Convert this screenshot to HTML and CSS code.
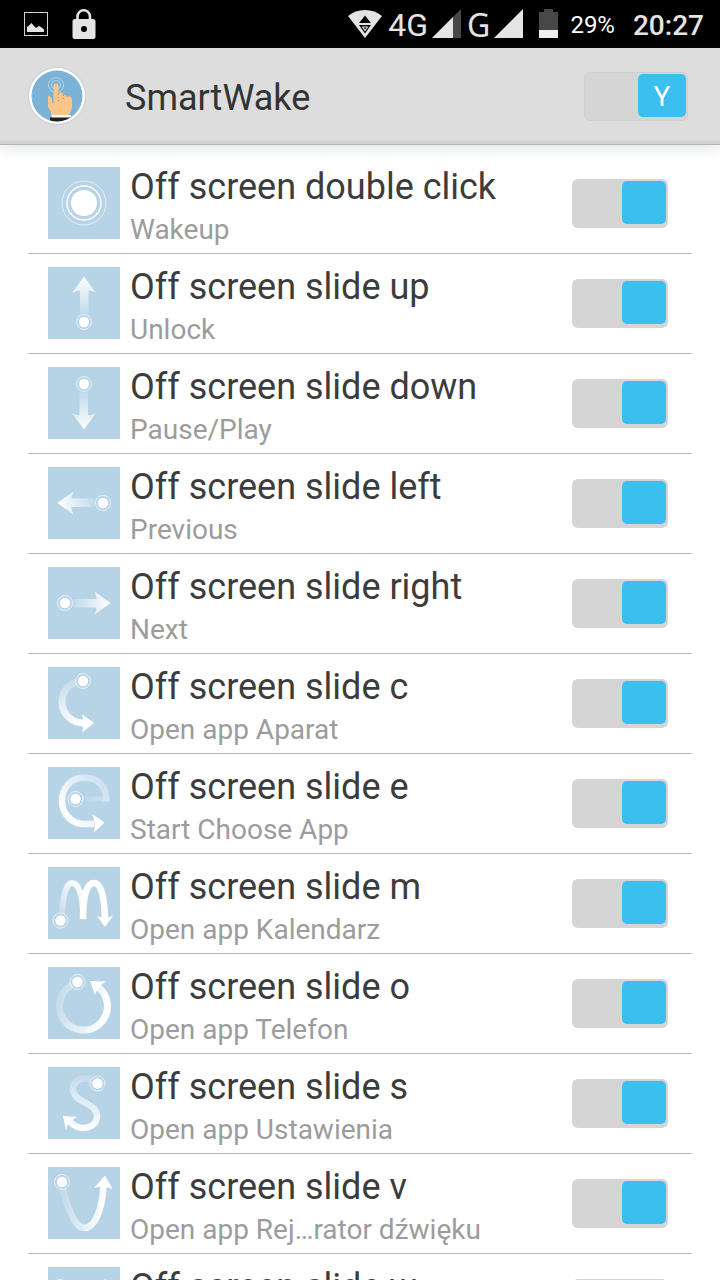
FILE: index.html
```html
<!DOCTYPE html>
<html lang="en">
<head>
    <meta charset="UTF-8">
    <meta name="viewport" content="width=device-width, initial-scale=1">
    <title>SmartWake</title>
    <link rel="stylesheet" href="styles.css">
</head>
<body>
    <!-- shared gradients and gesture parts -->
    <svg class="defs" width="0" height="0" aria-hidden="true">
        <defs>
            <linearGradient id="fade-up" gradientUnits="userSpaceOnUse" x1="0" y1="48" x2="0" y2="12">
                <stop offset="0" stop-color="#fff" stop-opacity="0.1"/>
                <stop offset="1" stop-color="#fff" stop-opacity="0.95"/>
            </linearGradient>
            <linearGradient id="fade-c" gradientUnits="userSpaceOnUse" x1="26" y1="10" x2="34" y2="58">
                <stop offset="0" stop-color="#fff" stop-opacity="0.15"/>
                <stop offset="1" stop-color="#fff"/>
            </linearGradient>
            <linearGradient id="fade-e" gradientUnits="userSpaceOnUse" x1="60" y1="20" x2="22" y2="50">
                <stop offset="0" stop-color="#fff" stop-opacity="0.3"/>
                <stop offset="1" stop-color="#fff" stop-opacity="0.95"/>
            </linearGradient>
            <linearGradient id="fade-bar" gradientUnits="userSpaceOnUse" x1="32" y1="0" x2="62" y2="0">
                <stop offset="0" stop-color="#fff" stop-opacity="0.05"/>
                <stop offset="1" stop-color="#fff" stop-opacity="0.3"/>
            </linearGradient>
            <linearGradient id="fade-right" gradientUnits="userSpaceOnUse" x1="10" y1="50" x2="38" y2="30">
                <stop offset="0" stop-color="#fff" stop-opacity="0.1"/>
                <stop offset="1" stop-color="#fff" stop-opacity="0.95"/>
            </linearGradient>
            <linearGradient id="fade-o" gradientUnits="userSpaceOnUse" x1="12" y1="24" x2="60" y2="38">
                <stop offset="0" stop-color="#fff" stop-opacity="0.2"/>
                <stop offset="1" stop-color="#fff"/>
            </linearGradient>
            <linearGradient id="fade-s" gradientUnits="userSpaceOnUse" x1="40" y1="8" x2="34" y2="60">
                <stop offset="0" stop-color="#fff" stop-opacity="0.15"/>
                <stop offset="1" stop-color="#fff" stop-opacity="0.95"/>
            </linearGradient>
            <linearGradient id="fade-v" gradientUnits="userSpaceOnUse" x1="14" y1="30" x2="56" y2="34">
                <stop offset="0" stop-color="#fff" stop-opacity="0.15"/>
                <stop offset="1" stop-color="#fff"/>
            </linearGradient>
            <g id="dot">
                <circle r="5.2" fill="#fff"/>
                <circle r="7.5" fill="none" stroke="#fff" stroke-opacity="0.65"/>
            </g>
            <g id="arrow-up">
                <path d="M36 9.500 47.500 25.500Q43 23.500 40.500 23.500V47H32V23.500Q29 23.500 24.500 25.500Z" fill="url(#fade-up)"/>
                <use href="#dot" x="36" y="55"/>
            </g>
        </defs>
    </svg>

    <div class="status-bar">
        <div class="status-left">
            <svg width="24" height="24" viewBox="0 0 24 24">
                <rect x="0.500" y="0.500" width="23" height="23" fill="none" stroke="#cfcfcf"/>
                <path d="M3 20V15L5 13.500 7.500 11 10 14 12 16 15 14 17 15 20 17.500V20Z" fill="#e4e4e4"/>
            </svg>
            <svg width="24" height="30" viewBox="0 0 24 30">
                <path d="M5.500 11V7.500A6.200 6.200 0 0 1 18 7.500V11" fill="none" stroke="#e4e4e4" stroke-width="2.600"/>
                <path fill-rule="evenodd" d="M3 10H21A2.500 2.500 0 0 1 23.500 12.500V27.500A2.500 2.500 0 0 1 21 30H3A2.500 2.500 0 0 1 0.500 27.500V12.500A2.500 2.500 0 0 1 3 10ZM12 17A3 3 0 1 0 12 23 3 3 0 0 0 12 17Z" fill="#e4e4e4"/>
            </svg>
        </div>
        <div class="status-right">
            <svg width="34" height="28" viewBox="0 0 34 28">
                <path d="M0 6Q7 0 17 0T34 6L17 28Z" fill="#e4e4e4"/>
                <path d="M17 5.500 23 13H11ZM11 15H23L17 23.500Z" fill="#000"/>
                <path d="M13.500 16.500H20.500L17 21.500Z" fill="#e4e4e4"/>
                <path d="M15.500 17.500H18.500L17 19.500Z" fill="#000"/>
            </svg>
            <span class="net-4g">4G</span>
            <svg width="29" height="29" viewBox="0 0 29 29">
                <path d="M29 0V29H0Z" fill="#484848"/>
                <path d="M21 8V29H0Z" fill="#e4e4e4"/>
            </svg>
            <span class="net-g">G</span>
            <svg width="29" height="29" viewBox="0 0 29 29">
                <path d="M29 0V29H0Z" fill="#e4e4e4"/>
            </svg>
            <svg class="battery" width="19" height="29" viewBox="0 0 19 29">
                <path d="M5 0H14V3H19V29H0V3H5Z" fill="#484848"/>
                <path d="M0 21H19V29H0Z" fill="#f0f0f0"/>
            </svg>
            <span class="percent">29%</span>
            <span class="clock">20:27</span>
        </div>
    </div>

    <header class="header">
        <svg class="logo" width="60" height="60" viewBox="0 0 60 60">
            <defs><clipPath id="logo-clip"><circle cx="30" cy="30" r="25.500"/></clipPath></defs>
            <circle cx="30" cy="30" r="29" fill="#cecece"/>
            <circle cx="30" cy="30" r="28" fill="#fff"/>
            <circle cx="30" cy="30" r="25.500" fill="#7bb2d6"/>
            <g fill="none" stroke="#b5d5e9">
                <circle cx="29" cy="19" r="7.500"/>
                <circle cx="29" cy="19" r="4.500"/>
            </g>
            <g clip-path="url(#logo-clip)">
                <path d="M24 50V46L21 41V31Q21 29 23 30L25 33V37H26.500V20Q26.500 17.500 29 17.500T31.500 20V28Q34 25.500 36 27.500V29Q39 28 40 31 44 29 45 33V42L42 49V50Z" fill="#f9c588"/>
                <path d="M31.500 28V35M36.500 29V34" stroke="#b98b5d" stroke-dasharray="1 2" fill="none"/>
                <path d="M25 49H44V52H25Z" fill="#fff"/>
                <path d="M23 51.500H44V57H23Z" fill="#222"/>
            </g>
        </svg>
        <h1><label for="main">SmartWake</label></h1>
        <span class="main-switch">
            <input class="switch" type="checkbox" id="main" checked>
            <span class="switch-text">Y</span>
        </span>
    </header>

    <main class="list">
        <div class="row">
            <svg class="icon" viewBox="0 0 72 72">
                <circle cx="36" cy="36" r="13" fill="#fff"/>
                <circle cx="36" cy="36" r="17" fill="none" stroke="#fff" stroke-width="1.400"/>
                <circle cx="36" cy="36" r="22" fill="none" stroke="#fff" stroke-opacity="0.6"/>
            </svg>
            <div class="text"><label for="g1">Off screen double click</label><p>Wakeup</p></div>
            <input class="switch" type="checkbox" id="g1" checked>
        </div>
        <div class="row">
            <svg class="icon" viewBox="0 0 72 72"><use href="#arrow-up"/></svg>
            <div class="text"><label for="g2">Off screen slide up</label><p>Unlock</p></div>
            <input class="switch" type="checkbox" id="g2" checked>
        </div>
        <div class="row">
            <svg class="icon" viewBox="0 0 72 72"><use href="#arrow-up" transform="rotate(180 36 36)"/></svg>
            <div class="text"><label for="g3">Off screen slide down</label><p>Pause/Play</p></div>
            <input class="switch" type="checkbox" id="g3" checked>
        </div>
        <div class="row">
            <svg class="icon" viewBox="0 0 72 72"><use href="#arrow-up" transform="rotate(-90 36 36)"/></svg>
            <div class="text"><label for="g4">Off screen slide left</label><p>Previous</p></div>
            <input class="switch" type="checkbox" id="g4" checked>
        </div>
        <div class="row">
            <svg class="icon" viewBox="0 0 72 72"><use href="#arrow-up" transform="rotate(90 36 36)"/></svg>
            <div class="text"><label for="g5">Off screen slide right</label><p>Next</p></div>
            <input class="switch" type="checkbox" id="g5" checked>
        </div>
        <div class="row">
            <svg class="icon" viewBox="0 0 72 72">
                <path d="M29 15C19 18 14 26 14 35 14 47 24 56 36 56" fill="none" stroke="url(#fade-c)" stroke-width="7"/>
                <path d="M34 47 46 56 34 65.500Q36.500 56 34 47Z" fill="#fff"/>
                <use href="#dot" x="35" y="14"/>
            </svg>
            <div class="text"><label for="g6">Off screen slide c</label><p>Open app Aparat</p></div>
            <input class="switch" type="checkbox" id="g6" checked>
        </div>
        <div class="row">
            <svg class="icon" viewBox="0 0 72 72">
                <path d="M34 32H55" fill="none" stroke="url(#fade-bar)" stroke-width="5"/>
                <path d="M55 31.500H58.500C58 19 49 10.500 36 10.500 23 10.500 14 21 14 34 14 47 24 57 36 57H46" fill="none" stroke="url(#fade-e)" stroke-width="6.500" stroke-linejoin="round"/>
                <path d="M44 47 56.500 55.500 46 65.500Q48 56 44 47Z" fill="#fff"/>
                <use href="#dot" x="27.500" y="32"/>
            </svg>
            <div class="text"><label for="g7">Off screen slide e</label><p>Start Choose App</p></div>
            <input class="switch" type="checkbox" id="g7" checked>
        </div>
        <div class="row">
            <svg class="icon" viewBox="0 0 72 72">
                <path d="M14 47C15 28 18 16 24 16 31 16 35 30 35 48" fill="none" stroke="url(#fade-right)" stroke-width="6"/>
                <path d="M35 52C35 28 39 16 46 16 53 16 56.500 30 57 51" fill="none" stroke="#fff" stroke-width="6.500"/>
                <path d="M49 49Q57 52 65 49L57 60Z" fill="#fff"/>
                <use href="#dot" x="12.500" y="53.500"/>
            </svg>
            <div class="text"><label for="g8">Off screen slide m</label><p>Open app Kalendarz</p></div>
            <input class="switch" type="checkbox" id="g8" checked>
        </div>
        <div class="row">
            <svg class="icon" viewBox="0 0 72 72">
                <path d="M24 18A24 24 0 1 0 50 20" fill="none" stroke="url(#fade-o)" stroke-width="7"/>
                <path d="M42 14 57.500 14.500Q50 19 47 28Z" fill="#fff"/>
                <use href="#dot" x="29.500" y="15"/>
            </svg>
            <div class="text"><label for="g9">Off screen slide o</label><p>Open app Telefon</p></div>
            <input class="switch" type="checkbox" id="g9" checked>
        </div>
        <div class="row">
            <svg class="icon" viewBox="0 0 72 72">
                <path d="M43 12C33 10 25 14 25 22 25 36 49 35 49 49 49 57 42 61 35 61 29 61 25 58 21 54" fill="none" stroke="url(#fade-s)" stroke-width="6.500"/>
                <path d="M15 49 29 50Q20 54 18 63Z" fill="#fff"/>
                <use href="#dot" x="49.500" y="16.500"/>
            </svg>
            <div class="text"><label for="g10">Off screen slide s</label><p>Open app Ustawienia</p></div>
            <input class="switch" type="checkbox" id="g10" checked>
        </div>
        <div class="row">
            <svg class="icon" viewBox="0 0 72 72">
                <path d="M15 22C19 40 27 61 36 61 46 61 54 45 55.500 19" fill="none" stroke="url(#fade-v)" stroke-width="6.500"/>
                <path d="M57 8.500 64.500 22Q55 18 46 21Z" fill="#fff"/>
                <use href="#dot" x="14" y="15"/>
            </svg>
            <div class="text"><label for="g11">Off screen slide v</label><p>Open app Rej…rator dźwięku</p></div>
            <input class="switch" type="checkbox" id="g11" checked>
        </div>
        <div class="row">
            <svg class="icon" viewBox="0 0 72 72">
                <path d="M12 24C14 44 18 56 24 56 30 56 35 44 35 28 35 44 40 56 46 56 52 56 56 44 57 22" fill="none" stroke="url(#fade-v)" stroke-width="6"/>
                <path d="M57 12 65 24Q57 21 49 24Z" fill="#fff"/>
                <use href="#dot" x="12" y="20"/>
            </svg>
            <div class="text"><label for="g12">Off screen slide w</label></div>
            <input class="switch" type="checkbox" id="g12" checked>
        </div>
    </main>
</body>
</html>
```

FILE: styles.css
```css
* {
    box-sizing: border-box;
}

body {
    margin: 0;
    height: 100vh;
    overflow: hidden;
    background-color: #fff;
    color: #3c3c3c;
    font-family: Roboto, sans-serif;
}

svg {
    display: block;
    flex-shrink: 0;
}

.defs {
    position: absolute;
}

/* status bar */

.status-bar {
    display: flex;
    justify-content: space-between;
    align-items: center;
    height: 48px;
    padding: 0 16px 0 24px;
    background-color: #000;
    color: #e4e4e4;
}

.status-left,
.status-right {
    display: flex;
    align-items: center;
}

.status-left {
    gap: 24px;
}

.status-right svg {
    margin-bottom: 1px;
}

.status-right span {
    padding-top: 2px;
}

.net-4g,
.net-g {
    margin: 0 4px 0 6px;
    font-size: 32px;
    line-height: 46px;
}

.net-g {
    font-family: "Noto Sans", sans-serif;
}

.battery {
    margin: 0 12px 0 16px;
}

.percent {
    margin-right: 18px;
    font-size: 24px;
    color: #fff;
}

.clock {
    font-size: 28px;
    font-weight: 500;
}

/* header */

.header {
    display: flex;
    align-items: center;
    height: 97px;
    padding: 0 32px 0 27px;
    background-color: #ddd;
    border-bottom: 1px solid #b4b4b4;
    box-shadow: inset 0 -3px 0 #d2d2d2, 0 4px 14px rgba(60, 80, 110, 0.14);
}

.header h1 {
    flex: 1;
    margin: 0 0 0 38px;
    padding-top: 4px;
    font-size: 36px;
    font-weight: 400;
    line-height: 42px;
    color: #333;
}

.main-switch {
    display: grid;
}

.main-switch .switch,
.switch-text {
    grid-area: 1 / 1;
}

.main-switch .switch {
    width: 104px;
    border: 1px solid #d0d0d0;
    padding: 1px;
}

.main-switch .switch::before {
    width: 48px;
}

.switch-text {
    z-index: 1;
    justify-self: end;
    width: 52px;
    padding-top: 1px;
    line-height: 48px;
    font-size: 28px;
    text-align: center;
    color: #fff;
    pointer-events: none;
}

/* switches */

.switch {
    appearance: none;
    display: flex;
    flex-shrink: 0;
    width: 96px;
    height: 49px;
    margin: 0;
    padding: 2px;
    border-radius: 6px;
    background-color: #d5d5d5;
    cursor: pointer;
}

.switch::before {
    content: "";
    width: 44px;
    height: 43px;
    border-radius: 5px;
    background-color: #aaa;
}

.switch:checked {
    justify-content: flex-end;
}

.switch:checked::before {
    background-color: #3abfef;
}

/* list */

.list {
    padding: 9px 28px 0;
}

.row {
    display: flex;
    align-items: center;
    height: 100px;
    padding: 0 24px 0 20px;
    border-bottom: 1px solid #b8b8b8;
}

.icon {
    width: 72px;
    height: 72px;
    margin-bottom: 1px;
    background-color: #b7d4e7;
}

.text {
    flex: 1;
    min-width: 0;
    min-height: 85px;
    padding: 5px 0 0 10px;
}

.text label {
    display: block;
    font-size: 36px;
    line-height: 42px;
}

.text p {
    margin: 5px 0 0;
    font-size: 28px;
    line-height: 33px;
    color: #9c9c9c;
}
```
